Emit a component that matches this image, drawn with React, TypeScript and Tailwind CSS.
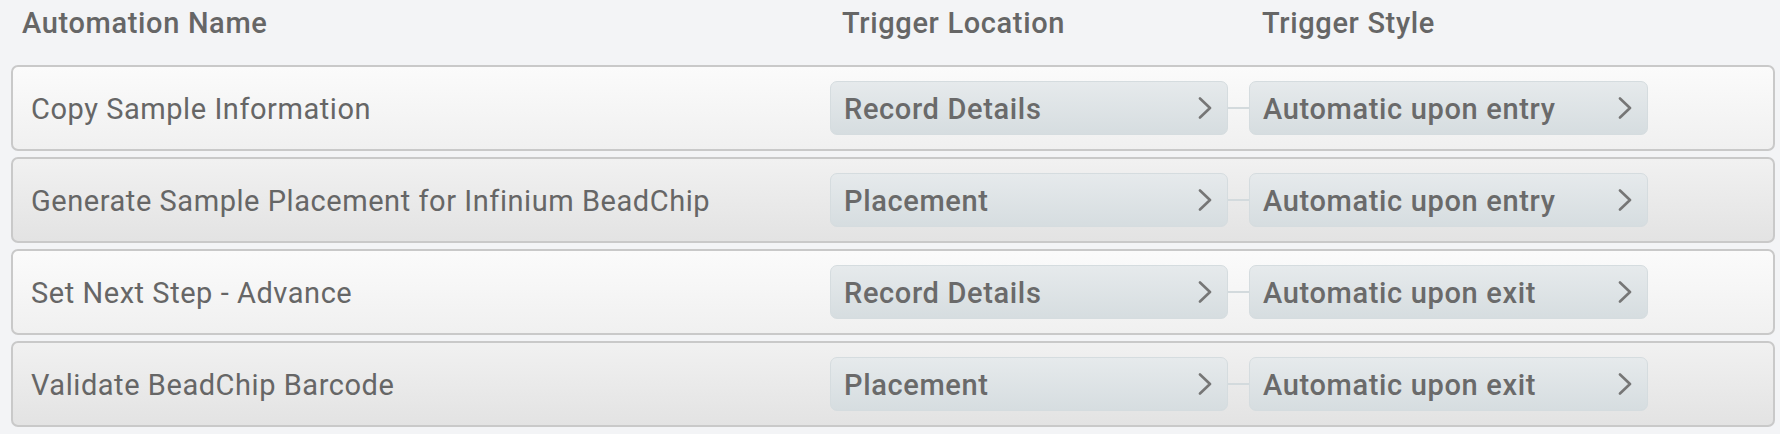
import React from "react";

const rows = [
  { name: "Copy Sample Information", loc: "Record Details", style: "Automatic upon entry" },
  { name: "Generate Sample Placement for Infinium BeadChip", loc: "Placement", style: "Automatic upon entry" },
  { name: "Set Next Step - Advance", loc: "Record Details", style: "Automatic upon exit" },
  { name: "Validate BeadChip Barcode", loc: "Placement", style: "Automatic upon exit" },
];

function Chevron() {
  return (
    <svg width="14" height="22" viewBox="0 0 14 22" fill="none" className="shrink-0">
      <polyline points="2,1.5 12,11 2,20.5" stroke="#767676" strokeWidth="2.6" strokeLinecap="round" strokeLinejoin="round" />
    </svg>
  );
}

function Pill({ label, w }: { label: string; w: string }) {
  return (
    <div
      className={`${w} h-[54px] shrink-0 flex items-center justify-between pl-[13px] pr-[15px] rounded-[7px] border border-[#d5dcdf] bg-gradient-to-b from-[#e6eaec] to-[#d6dde0] text-[#6a6a6a] font-medium text-[29px] tracking-[0.65px]`}
    >
      <span className="pt-[3px]">{label}</span>
      <Chevron />
    </div>
  );
}

export default function App() {
  return (
    <div className="w-[1780px] h-[434px] bg-[#f3f4f6] overflow-hidden" style={{ fontFamily: "Roboto, 'Liberation Sans', sans-serif" }}>
      <div className="h-[46px] flex items-center pl-[22px] pt-[2px] text-[#666666] font-medium text-[29px] tracking-[0.65px]">
        <div className="w-[820px]">Automation Name</div>
        <div className="w-[420px]">Trigger Location</div>
        <div>Trigger Style</div>
      </div>
      <div className="mt-[19px] pl-[11px] pr-[5px] flex flex-col gap-[6px]">
        {rows.map((r, i) => (
          <div
            key={i}
            className={`h-[86px] flex items-center rounded-[7px] border-2 border-[#c9c9c9] pl-[18px] ${
              i % 2 === 0
                ? "bg-gradient-to-b from-[#fbfbfb] to-[#f0f0f0]"
                : "bg-gradient-to-b from-[#f1f1f1] to-[#e3e3e3]"
            }`}
          >
            <div className="w-[799px] shrink-0 pt-[3px] text-[#666666] text-[29px] tracking-[0.55px]">{r.name}</div>
            <Pill label={r.loc} w="w-[398px]" />
            <div className="w-[21px] h-[2px] bg-[#d3dadd] shrink-0" />
            <Pill label={r.style} w="w-[399px]" />
          </div>
        ))}
      </div>
    </div>
  );
}
